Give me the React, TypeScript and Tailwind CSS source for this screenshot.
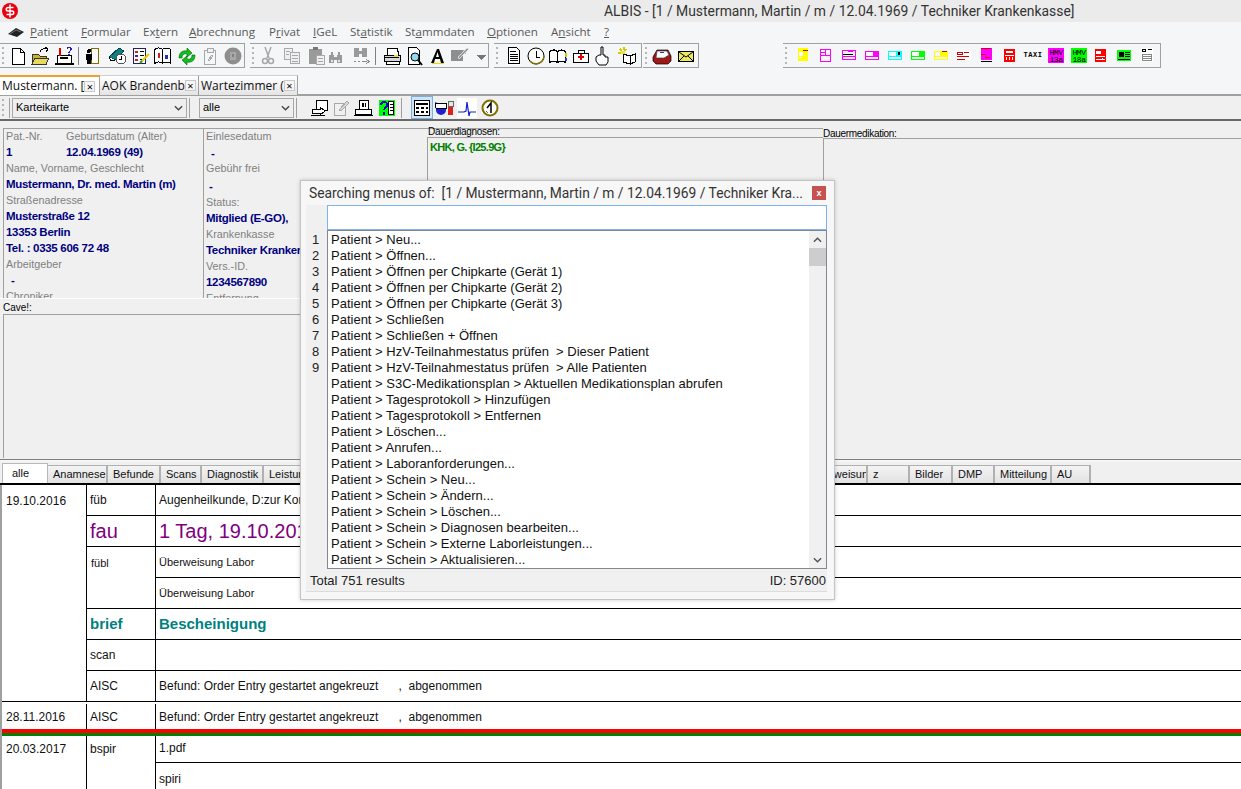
import React from "react";

const arial = "font-['Liberation_Sans',Arial,sans-serif]";
const segoe = "font-['Open_Sans',sans-serif]";
const roboto = "font-['Roboto',sans-serif]";

function Ico({ children, className = "" }: { children: React.ReactNode; className?: string }) {
  return (
    <svg viewBox="0 0 20 20" width={20} height={20} className={"shrink-0 " + className} shapeRendering="crispEdges">
      {children}
    </svg>
  );
}

const G = "#a8a8a8";

const icons: Record<string, React.ReactNode> = {
  newdoc: <path d="M4.500 2.500h8l4 4v12h-12z M12.500 2.500v4h4" fill="#fff" stroke="#000" />,
  open: (
    <>
      <path d="M2 8h6l2 2h6v8H2z" fill="#c8b432" stroke="#333" />
      <path d="M2 18l3-6h14l-3 6z" fill="#e8d860" stroke="#333" />
      <path d="M10 6c1-3 4-4 7-3M15 1l3 2-2 3" fill="none" stroke="#000" />
    </>
  ),
  pat: (
    <>
      <path d="M3 9h14v8H3z M1 17h18v1H1z" fill="#fff" stroke="#000" />
      <path d="M6 11h8v2H6z" fill="#000" />
      <path d="M5 2v7h1V2z" fill="#e00000" stroke="#e00000" />
      <path d="M13 3c1-2 4-2 4 0s-2 2-2 4M15 8v1" fill="none" stroke="#2020c0" strokeWidth={1.4} />
    </>
  ),
  door: (
    <>
      <path d="M9.500 2.500h7v15h-7z" fill="#fff" stroke="#807000" />
      <circle cx={7} cy={5} r={2} fill="#000" />
      <path d="M4 8h6v6H9v4H5v-4H4z" fill="#000" />
    </>
  ),
  book: (
    <>
      <path d="M1 11L11 2l5 3-9 9z" fill="#0f7f7f" stroke="#004040" />
      <path d="M1 11l2 4 4-1" fill="#fff" stroke="#000" />
      <circle cx={13} cy={13} r={5} fill="#fff" stroke="#555" />
      <path d="M13 10v3h-2" fill="none" stroke="#000" />
    </>
  ),
  list: (
    <>
      <path d="M2.500 2.500h12v15h-12z" fill="#fff" stroke="#202060" strokeWidth={1.5} />
      <path d="M4 5h3v2H4z" fill="#d02020" />
      <path d="M4 9h3v2H4z" fill="#2030b0" />
      <path d="M4 13h3v2H4z" fill="#d02020" />
      <path d="M9 5h4v1H9zM9 9h4v1H9zM9 13h2v1H9z" fill="#000" />
      <path d="M10 16l8-8" stroke="#e0d000" strokeWidth={2} shapeRendering="auto" />
      <path d="M9 17l2-2" stroke="#20a020" strokeWidth={2} shapeRendering="auto" />
    </>
  ),
  pair: (
    <>
      <path d="M1.500 3.500c3-2 6-2 8 0v14c-2-2-5-2-8 0z M9.500 3.500c2-2 6-2 8 0v14c-2-2-6-2-8 0z" fill="#fff" stroke="#000" />
      <path d="M5 7h2v5H5z" fill="#d02020" />
      <path d="M12 9h3v4h-3z" fill="#2030c0" />
    </>
  ),
  sync: (
    <>
      <path d="M2 12c0-5 3-8 8-7V2l5 5-5 4V8c-3-1-5 1-5 4z" fill="#10c020" stroke="#006000" strokeWidth={0.6} shapeRendering="auto" />
      <path d="M18 9c0 5-3 8-8 7v3l-5-5 5-4v3c3 1 5-1 5-4z" fill="#10c020" stroke="#006000" strokeWidth={0.6} shapeRendering="auto" />
    </>
  ),
  clip: (
    <>
      <path d="M4.500 4.500h11v14h-11z" fill="none" stroke={G} />
      <path d="M7 2h6v4H7z" fill="#f0f0f0" stroke={G} />
      <path d="M8 14l4-5 1 1-4 5z" fill="none" stroke={G} />
    </>
  ),
  disk: (
    <>
      <circle cx={10} cy={10} r={8.500} fill="#8e8e8e" shapeRendering="auto" />
      <path d="M7 6h6v8H7z" fill="#a8a8a8" />
      <path d="M9 8h2v3H9z" fill="#808080" />
    </>
  ),
  cut: (
    <>
      <path d="M7 1l4 11M13 1l-4 11" stroke={G} strokeWidth={1.5} shapeRendering="auto" />
      <circle cx={7} cy={15} r={2.500} fill="none" stroke={G} strokeWidth={1.5} shapeRendering="auto" />
      <circle cx={13} cy={15} r={2.500} fill="none" stroke={G} strokeWidth={1.5} shapeRendering="auto" />
    </>
  ),
  copy: (
    <>
      <path d="M2.500 2.500h8v11h-8z" fill="#f0f0f0" stroke={G} />
      <path d="M8.500 6.500h9v11h-9z" fill="#f0f0f0" stroke={G} />
      <path d="M10 9h6v1h-6zM10 12h6v1h-6zM10 15h6v1h-6zM4 5h4v1H4zM4 8h3v1H4z" fill={G} />
    </>
  ),
  paste: (
    <>
      <path d="M2 3h13v15H2z" fill="#9a9a9a" />
      <path d="M6 1h5v3H6z" fill="#777" />
      <path d="M9.500 9.500h8v9h-8z" fill="#f0f0f0" stroke={G} />
      <path d="M11 12h5v1h-5zM11 15h5v1h-5z" fill={G} />
    </>
  ),
  binoc: (
    <>
      <path d="M3 9h5v8H3zM11 9h5v8h-5zM8 11h3v3H8z" fill="#9a9a9a" />
      <path d="M5 6h2v3H5zM12 6h2v3h-2z" fill="#9a9a9a" />
      <path d="M5 14h2v2H5zM12 14h2v2h-2z" fill="#e8e8e8" />
    </>
  ),
  binocnext: (
    <>
      <path d="M3 2h5v9H3zM11 2h5v9h-5zM8 5h3v3H8z" fill="#9a9a9a" />
      <path d="M3 15h2v1H3zM7 15h2v1H7zM11 15h5v1h-5z" fill="#8a8a8a" />
      <path d="M15 13l3 2.500-3 2.500" fill="none" stroke="#8a8a8a" />
    </>
  ),
  print: (
    <>
      <path d="M6 2h9l2 7H5z" fill="#fff" stroke="#000" />
      <path d="M2 9h16v6H2z" fill="#d8d8d8" stroke="#000" />
      <path d="M4 15h13v3H4z" fill="#fff" stroke="#000" />
      <path d="M3 11h14v1H3z" fill="#000" />
      <path d="M12 9h4v2h-4z" fill="#e8e040" />
    </>
  ),
  preview: (
    <>
      <path d="M3.500 1.500h8l3 3v14h-11z" fill="#fff" stroke="#000" />
      <circle cx={10} cy={11} r={4} fill="#8fdcf0" stroke="#000" shapeRendering="auto" />
      <path d="M13 14l4 5" stroke="#000" strokeWidth={2} shapeRendering="auto" />
    </>
  ),
  letter: (
    <>
      <path d="M4 17h12v1H4z" fill="#e8d800" />
      <path d="M3 17L9 3h2l5 14h-3l-1-4H7l-1 4z M8 11h3l-1.500-5z" fill="#000" shapeRendering="auto" />
    </>
  ),
  pen: (
    <>
      <path d="M1 4h12v11H1z" fill="#8e8e8e" />
      <path d="M13 4h4l-1 5z" fill="#a8a8a8" />
      <path d="M9 13l10-10-2-1-9 9z" fill="#9a9a9a" stroke="#f0f0f0" strokeWidth={0.7} shapeRendering="auto" />
    </>
  ),
  caret: <path d="M5 9h10l-5 5z" fill="#777" />,
  doc: (
    <>
      <path d="M4.500 1.500h8l3 3v13h-11z" fill="#fff" stroke="#000" />
      <path d="M6 5h6v1H6zM6 8h8v1H6zM6 10h8v1H6zM6 12h8v1H6zM6 14h8v1H6z" fill="#000" />
      <path d="M3 18h14v1H3z" fill="#fff" />
    </>
  ),
  clock: (
    <>
      <circle cx={10} cy={10} r={8} fill="#fff" stroke="#000" shapeRendering="auto" />
      <path d="M18 10a8 8 0 0 1-14 5" fill="none" stroke="#807000" strokeWidth={1.5} shapeRendering="auto" />
      <path d="M10 5v6h4" fill="none" stroke="#000" />
    </>
  ),
  openbook: (
    <>
      <path d="M1.500 5.500c3-2 6-2 8 0v11c-2-1.500-5-1.500-8 0z M9.500 5.500c2-2 6-2 8 0v11c-2-1.500-6-1.500-8 0z" fill="#fff" stroke="#000" strokeWidth={1.2} />
      <path d="M17 7h2v4h-2z" fill="#d0c800" />
      <path d="M17 12h2v3h-2z" fill="#2040c0" />
    </>
  ),
  med: (
    <>
      <path d="M2.500 7.500h15v9h-15z" fill="#fff" stroke="#000" />
      <path d="M7 7V4h6v3" fill="none" stroke="#000" />
      <path d="M9 8h2v2h2v2h-2v2H9v-2H7v-2h2z" fill="#e00000" />
    </>
  ),
  hand: (
    <path d="M9 1h2v8h2v2h3v5l-2 3H7l-3-4v-4l3-2h2z" fill="#fff" stroke="#000" strokeLinejoin="round" shapeRendering="auto" />
  ),
  tip: (
    <>
      <path d="M6 8l7 2v8l-7-2z M13 10l5-2v8l-5 2z" fill="#fff" stroke="#000" />
      <path d="M3 3l2 2M7 1v3M1 7h3M9 3l-1 2" stroke="#d8c800" strokeWidth={1.5} />
      <path d="M4 5h4v3H4z" fill="#e8e040" />
    </>
  ),
  inbox: (
    <>
      <path d="M1 11L5 4h11l3 6v5l-3 3H4l-3-3z" fill="#a01818" stroke="#000" strokeWidth={0.7} shapeRendering="auto" />
      <path d="M5 5h10l2 4-5 3H4z" fill="#fff" stroke="#444" strokeWidth={0.7} shapeRendering="auto" />
      <path d="M8 6h4v1H8z" fill="#2040c0" />
    </>
  ),
  mail: (
    <>
      <path d="M2.500 5.500h15v10h-15z" fill="#ece860" stroke="#000" />
      <path d="M3 6l7 5 7-5M3 15l5-5M17 15l-5-5" fill="none" stroke="#000" shapeRendering="auto" />
    </>
  ),
  sendform: (
    <>
      <path d="M6.500 2.500h11v10h-11z" fill="#fff" stroke="#000" />
      <path d="M2 11h8v-2l5 4-5 4v-2H2z" fill="#fff" stroke="#000" />
      <path d="M1 17.500h14" stroke="#000" />
    </>
  ),
  note: (
    <>
      <path d="M3.500 5.500h11v12h-11z" fill="none" stroke={G} />
      <path d="M8 12l8-9 2 2-8 8z" fill="#d8d8d8" stroke={G} />
    </>
  ),
  printer2: (
    <>
      <path d="M6.500 2.500h9v9h-9z" fill="#fff" stroke="#000" />
      <path d="M9 5h2v4H9zM12 5h1v4h-1z" fill="#000" />
      <path d="M2.500 11.500h16v5h-16z" fill="#fff" stroke="#000" />
      <path d="M1 17h19v1H1z" fill="#000" />
    </>
  ),
  help: (
    <>
      <path d="M2 2h16v16H2z" fill="#00ff00" />
      <path d="M4 7c0-4 6-4 6 0 0 3-3 3-3 5M7 14v3" fill="none" stroke="#0000d0" strokeWidth={2} />
      <path d="M11.500 3.500h5v13h-5z" fill="#fff" stroke="#000" />
      <path d="M13 6h3v1h-3zM13 9h3v1h-3zM13 12h3v1h-3z" fill="#000" />
    </>
  ),
  table: (
    <>
      <path d="M2.500 2.500h15v15h-15z" fill="#fff" stroke="#000" />
      <path d="M4 5h12v2H4zM4 9h3v2H4zM9 9h3v2H9zM14 9h2v2h-2zM4 13h3v2H4zM9 13h3v2H9zM14 13h2v2h-2z" fill="#000" />
    </>
  ),
  mortar: (
    <>
      <path d="M1 4l5 2h6v6a5 5 0 0 1-10 0z" fill="#2020d0" shapeRendering="auto" />
      <path d="M1 5h11v5H2z" fill="#fff" stroke="#000" />
      <path d="M14 4h5v13h-5z" fill="#e02020" />
      <path d="M14 3h5v5h-5z" fill="#e8e8e8" stroke="#666" />
    </>
  ),
  ecg: (
    <>
      <path d="M0 0h20v20H0z" fill="#fff" />
      <path d="M1 14h6l2-1 1-9 2 14 1-4h6" fill="none" stroke="#1020d0" strokeWidth={1.2} shapeRendering="auto" />
    </>
  ),
  one: (
    <>
      <circle cx={10} cy={10} r={7.500} fill="#fff" stroke="#807000" strokeWidth={2} shapeRendering="auto" />
      <path d="M7 10l4-5v10" fill="none" stroke="#000" strokeWidth={1.500} shapeRendering="auto" />
      <path d="M6 13l2 2" stroke="#777" />
    </>
  ),
};

// the coloured form symbols of the right toolbar
function Form({ name }: { name: string }) {
  const r = (x: number, y: number, w: number, h: number, f: string) => <rect x={x} y={y} width={w} height={h} fill={f} />;
  switch (name) {
    case "y1":
      return <>{r(5, 0, 10, 12, "#ffff00")}{r(5, 12, 10, 1, "#ffff00")}{r(10, 2, 5, 1, "#c00000")}{r(6, 4, 4, 4, "#fff")}{r(6, 9, 3, 1, "#fff")}</>;
    case "m1":
      return <path d="M4.500 1.500h10v12h-10z M4.500 7.500h10 M9.500 1.500v6 M4.500 4.500h5" fill="none" stroke="#ff00ff" />;
    case "m2":
      return <>{<path d="M3.500 2.500h13v9h-13z M3.500 8.500h13" fill="none" stroke="#ff00ff" />}{r(4, 6, 10, 1, "#000")}{r(9, 3, 5, 1, "#ff00ff")}</>;
    case "m3":
      return <>{<path d="M3.500 3.500h13v8h-13z M3.500 8.500h13" fill="none" stroke="#ff00ff" />}{r(11, 3, 6, 5, "#ff00ff")}</>;
    case "c":
      return <>{<path d="M3.500 3.500h13v8h-13z M3.500 8.500h13" fill="none" stroke="#00ffff" />}{r(11, 3, 6, 5, "#00ffff")}{r(13, 4, 2, 3, "#000")}</>;
    case "g":
      return <>{<path d="M3.500 3.500h13v8h-13z M3.500 8.500h13" fill="none" stroke="#00ff00" />}{r(11, 3, 6, 5, "#00ff00")}</>;
    case "y2":
      return <>{<path d="M3.500 3.500h13v8h-13z M3.500 8.500h13" fill="none" stroke="#ffff00" />}{r(9, 4, 8, 4, "#ffff00")}{r(11, 3, 5, 1, "#c00000")}</>;
    case "r1":
      return <>{r(2, 3, 15, 9, "#fff")}<path d="M3.500 4.500h5v2h-5z" fill="none" stroke="#d00000" />{r(10, 4, 5, 1, "#d00000")}{r(3, 8, 12, 1, "#d00000")}{r(3, 11, 8, 1, "#d00000")}</>;
    case "m4":
      return <>{r(4, 0, 11, 12, "#ff00ff")}{r(4, 0, 10, 1, "#d00000")}{r(4, 6, 5, 1, "#d00000")}{r(8, 9, 5, 1, "#d00000")}{r(4, 12, 3, 2, "#fff")}{r(4, 13, 11, 1, "#000")}</>;
    case "r2":
      return <>{r(4, 1, 11, 13, "#ff0000")}{r(6, 3, 7, 2, "#fff")}{r(5, 7, 9, 1, "#fff")}{r(6, 9, 1, 3, "#fff")}{r(9, 9, 1, 3, "#fff")}{r(12, 9, 1, 3, "#fff")}</>;
    case "r3":
      return <>{r(4, 1, 11, 13, "#ff0000")}{r(5, 3, 5, 3, "#fff")}{r(5, 8, 9, 1, "#fff")}{r(5, 11, 9, 1, "#fff")}{r(11, 10, 1, 2, "#fff")}</>;
    case "gr":
      return <>{r(3, 2, 14, 11, "#00ff00")}{r(5, 4, 5, 5, "#000")}{r(11, 4, 5, 1, "#000")}{r(11, 6, 5, 1, "#000")}{r(11, 8, 5, 1, "#000")}{r(4, 11, 12, 1, "#000")}</>;
    default:
      return <>{r(4, 0, 12, 14, "#fff")}<path d="M5.500 1.500h3v2h-3z" fill="none" stroke="#000" />{r(11, 1, 4, 1, "#000")}<path d="M5.500 6.500h9v6h-9z M5.500 8.500h9 M5.500 10.500h9" fill="none" stroke="#888" /></>;
  }
}

function FormIcon({ name, className }: { name: string; className: string }) {
  return (
    <svg viewBox="0 0 20 16" width={20} height={16} className={"shrink-0 " + className} shapeRendering="crispEdges">
      <Form name={name} />
    </svg>
  );
}

function Hmv({ top, bottom, bg, className }: { top: string; bottom: string; bg: string; className: string }) {
  return (
    <span className={"flex h-[15px] w-[16px] shrink-0 flex-col items-center justify-center overflow-hidden text-center font-['Liberation_Mono',monospace] text-[8px] leading-[7px] tracking-[-0.5px] text-black " + bg + " " + className}>
      <span>{top}</span>
      <span>{bottom}</span>
    </span>
  );
}

function Grip() {
  return (
    <span className="ml-[2px] flex h-[22px] w-[3px] shrink-0 flex-col justify-between py-[2px]">
      {[0, 1, 2, 3].map((i) => (
        <span key={i} className="h-[2px] w-[2px] bg-[#b5b5b5]" />
      ))}
    </span>
  );
}

function Bar({ width, items, className = "" }: { width: string; items: [string, string][]; className?: string }) {
  return (
    <div className={"relative flex h-[25px] shrink-0 items-center border-y border-r border-[#a0a0a0] " + width + " " + className}>
      <span className="absolute left-0 top-0 flex h-full items-center">
        <Grip />
      </span>
      {items.map(([name, ml], i) =>
        name === "|" ? (
          <span key={i} className={"h-[18px] w-px shrink-0 bg-[#808080] " + ml} />
        ) : (
          <Ico key={i} className={ml}>
            {icons[name]}
          </Ico>
        ),
      )}
    </div>
  );
}

function Logo() {
  return (
    <svg viewBox="0 0 16 16" width={16} height={16} className="ml-[2px] shrink-0">
      <circle cx={8} cy={8} r={8} fill="#e8000c" />
      <path d="M8 1.500v13" stroke="#fff" strokeWidth={1.4} />
      <path d="M11.500 4.500H6a1.700 1.700 0 0 0 0 3.500h4a1.700 1.700 0 0 1 0 3.500H4.500" fill="none" stroke="#fff" strokeWidth={1.500} />
    </svg>
  );
}

// before the access key, the key, after it, slot width
const menu: [string, string, string, string][] = [
  ["", "P", "atient", "w-[51px]"],
  ["", "F", "ormular", "w-[62px]"],
  ["Ex", "t", "ern", "w-[46px]"],
  ["", "A", "brechnung", "w-[80px]"],
  ["P", "r", "ivat", "w-[44px]"],
  ["", "I", "GeL", "w-[37px]"],
  ["St", "a", "tistik", "w-[55px]"],
  ["St", "a", "mmdaten", "w-[82px]"],
  ["", "O", "ptionen", "w-[64px]"],
  ["A", "n", "sicht", "w-[53px]"],
  ["", "?", "", "w-[12px]"],
];

function Menu() {
  return (
    <div className={"flex h-[20px] items-center bg-[#f5f6f7] text-[11.600px] text-[#5a5a5a] " + segoe}>
      <svg viewBox="0 0 18 12" width={18} height={12} className="ml-[7px] mr-[5px] shrink-0">
        <path d="M1 8l8-6 8 4-7 5z" fill="#222" />
        <path d="M3 8l6-4 5 2" fill="none" stroke="#777" />
      </svg>
      {menu.map(([a, k, c, w]) => (
        <span key={a + k + c} className={"whitespace-nowrap " + w}>
          {a}
          <span className="underline">{k}</span>
          {c}
        </span>
      ))}
    </div>
  );
}

function Toolbars() {
  const forms = ["y1", "m1", "m2", "m3", "c", "g", "y2", "r1", "m4", "r2"];
  return (
    <div className="flex h-[33px] items-start bg-[#f5f6f7] pt-[1px]">
      <Bar
        width="w-[245px]"
        items={[
          ["newdoc", "ml-[8px]"],
          ["open", "ml-[2px]"],
          ["pat", "ml-[4px]"],
          ["|", "ml-[4px]"],
          ["door", "ml-[3px]"],
          ["book", "ml-[6px]"],
          ["list", "ml-[3px]"],
          ["pair", "ml-[2px]"],
          ["sync", "ml-[4px]"],
          ["clip", "ml-[3px]"],
          ["disk", "ml-[3px]"],
        ]}
      />
      <Bar
        width="w-[239px]"
        className="ml-[5px]"
        items={[
          ["cut", "ml-[8px]"],
          ["copy", "ml-[4px]"],
          ["paste", "ml-[5px]"],
          ["binoc", "ml-[-1px]"],
          ["binocnext", "ml-[5px]"],
          ["|", "ml-[4px]"],
          ["print", "ml-[6px]"],
          ["preview", "ml-[3px]"],
          ["letter", "ml-[3px]"],
          ["pen", "ml-[2px]"],
          ["caret", "ml-[1px]"],
        ]}
      />
      <Bar
        width="w-[148px]"
        className="ml-[5px]"
        items={[
          ["doc", "ml-[10px]"],
          ["clock", "ml-[2px]"],
          ["openbook", "ml-[2px]"],
          ["med", "ml-[3px]"],
          ["hand", "ml-[1px]"],
          ["tip", "ml-[5px]"],
        ]}
      />
      <Bar
        width="w-[56px]"
        className="ml-[1px]"
        items={[
          ["inbox", "ml-[9px]"],
          ["mail", "ml-[4px]"],
        ]}
      />
      <div className="relative ml-[84px] flex h-[25px] w-[378px] shrink-0 items-center border-y border-r border-[#a0a0a0]">
        <span className="absolute left-0 top-0 flex h-full items-center">
          <Grip />
        </span>
        {forms.map((f, i) => (
          <FormIcon key={f} name={f} className={i === 0 ? "ml-[10px]" : "ml-[3px]"} />
        ))}
        <span className="ml-[3px] w-[20px] shrink-0 text-center font-['Liberation_Mono',monospace] text-[7px] font-bold tracking-[0.5px] text-black">TAXI</span>
        <Hmv top="HMV" bottom="13a" bg="bg-[#ff00ff]" className="ml-[5px]" />
        <Hmv top="HMV" bottom="18a" bg="bg-[#00ff00]" className="ml-[7px]" />
        <FormIcon name="r3" className="ml-[4px]" />
        <FormIcon name="gr" className="ml-[3px]" />
        <FormIcon name="w" className="ml-[3px]" />
      </div>
    </div>
  );
}

function DocTab({ label, active }: { label: string; active?: boolean }) {
  return (
    <div
      className={
        "flex h-[20px] items-center justify-between overflow-hidden whitespace-nowrap border-r border-[#a0a0a0] pl-[2px] pr-[4px] text-[12px] text-[#111] " +
        (active ? "w-[100px] border-t-2 border-t-[#f0a030] bg-white" : "w-[99px] border-t border-t-[#d0d0d0] bg-gradient-to-b from-[#ffffff] to-[#e4e4e4]") +
        " " +
        segoe
      }
    >
      <span>{label}</span>
      <span className="flex h-[11px] w-[11px] shrink-0 items-center justify-center border border-[#c8c8c8] bg-[#f5f5f5] text-[11px] leading-none text-black">
        ×
      </span>
    </div>
  );
}

function Combo({ label, width }: { label: string; width: string }) {
  return (
    <div className={"flex h-[20px] shrink-0 items-center justify-between border border-[#a8a8a8] bg-[#efefef] pl-[3px] pr-[3px] text-[11px] text-black " + width + " " + arial}>
      <span>{label}</span>
      <svg viewBox="0 0 10 6" width={9} height={6}>
        <path d="M1 1l4 4 4-4" fill="none" stroke="#444" strokeWidth={1.500} />
      </svg>
    </div>
  );
}

function Sep({ className }: { className: string }) {
  return <span className={"h-[20px] w-px shrink-0 bg-[#a0a0a0] " + className} />;
}

function FilterBar() {
  return (
    <div className="flex h-[26px] items-center border-t border-b-2 border-t-[#a0a0a0] border-b-[#696969] bg-[#f0f0f0]">
      <Grip />
      <Sep className="ml-[4px]" />
      <Combo label="Karteikarte" width="w-[175px] ml-[2px]" />
      <Sep className="ml-[2px]" />
      <Combo label="alle" width="w-[95px] ml-[9px]" />
      <Sep className="ml-[2px]" />
      <Ico className="ml-[13px]">{icons.sendform}</Ico>
      <Ico className="ml-[1px]">{icons.note}</Ico>
      <Ico className="ml-[2px]">{icons.printer2}</Ico>
      <Ico className="ml-[4px]">{icons.help}</Ico>
      <Sep className="ml-[4px]" />
      <span className="ml-[9px] flex h-[23px] w-[22px] shrink-0 items-center justify-center border border-[#7ab0e0] bg-[#cfe4f8]">
        <Ico>{icons.table}</Ico>
      </span>
      <Ico className="ml-[1px]">{icons.mortar}</Ico>
      <Ico className="ml-[3px]">{icons.ecg}</Ico>
      <Ico className="ml-[3px]">{icons.one}</Ico>
    </div>
  );
}

function Label({ children, className = "" }: { children: React.ReactNode; className?: string }) {
  return <div className={"h-[16px] whitespace-nowrap text-[10.800px] leading-[16px] text-[#808080] " + className}>{children}</div>;
}

function Value({ children, className = "" }: { children: React.ReactNode; className?: string }) {
  return <div className={"h-[16px] whitespace-nowrap text-[11.500px] leading-[16px] font-bold tracking-[-0.3px] text-[#000080] " + className}>{children}</div>;
}

function PatientPanel() {
  return (
    <div className={"h-[338px] bg-[#f0f0f0] " + arial}>
      <div className="flex h-[177px] pt-[7px]">
        <div className="ml-[3px] h-[170px] w-[200px] overflow-hidden border-l border-t border-[#a0a0a0] pl-[2px]">
          <div className="mt-[-1px] flex">
            <div className="w-[60px]">
              <Label>Pat.-Nr.</Label>
              <Value>1</Value>
            </div>
            <div>
              <Label>Geburtsdatum (Alter)</Label>
              <Value>12.04.1969 (49)</Value>
            </div>
          </div>
          <Label>Name, Vorname, Geschlecht</Label>
          <Value>Mustermann, Dr. med. Martin (m)</Value>
          <Label>Straßenadresse</Label>
          <Value>Musterstraße 12</Value>
          <Value>13353 Berlin</Value>
          <Value>Tel. : 0335 606 72 48</Value>
          <Label>Arbeitgeber</Label>
          <Value className="pl-[5px]">-</Value>
          <Label>Chroniker</Label>
        </div>
        <div className="h-[170px] w-[224px] overflow-hidden border-l border-t border-[#a0a0a0] pl-[2px]">
          <Label className="mt-[-1px]">Einlesedatum</Label>
          <Value className="pl-[5px] pt-px">-</Value>
          <Label>Gebühr frei</Label>
          <Value className="mt-[2px] pl-[3px]">-</Value>
          <Label>Status:</Label>
          <Value>Mitglied (E-GO),</Value>
          <Label>Krankenkasse</Label>
          <Value>Techniker Krankenkasse</Value>
          <Label>Vers.-ID.</Label>
          <Value>1234567890</Value>
          <Label>Entfernung</Label>
        </div>
        <div className="h-[170px] w-[396px] border-t border-[#a0a0a0] text-[10px] text-black">
          <div className="h-[8px] pl-px leading-[6px] tracking-[-0.3px]">Dauerdiagnosen:</div>
          <div className="h-[161px] border-l border-t border-[#a0a0a0] pl-[2px] pt-[1px] text-[11px] font-bold tracking-[-0.7px] text-[#008000]">
            KHK, G. {"{I25.9G}"}
          </div>
        </div>
        <div className="grow text-[10px] text-black">
          <div className="h-[10px] pt-[1px] leading-[9px] tracking-[-0.3px]">Dauermedikation:</div>
          <div className="h-[160px] border-l border-t border-[#a0a0a0]" />
        </div>
      </div>
      <div className="w-[826px] border-t border-white pl-[3px]">
        <div className="h-[15px] text-[10px] leading-[18px] text-black">Cave!:</div>
        <div className="h-[144px] border-l border-t border-[#a0a0a0]" />
      </div>
    </div>
  );
}

const sheetTabs: [string, string][] = [
  ["Anamnese", "w-[60px]"],
  ["Befunde", "w-[53px]"],
  ["Scans", "w-[41px]"],
  ["Diagnostik", "w-[62px]"],
  ["Leistungen", "w-[541px]"],
  ["Überweisun", "w-[63px]"],
  ["z", "w-[42px]"],
  ["Bilder", "w-[43px]"],
  ["DMP", "w-[42px]"],
  ["Mitteilung", "w-[57px]"],
  ["AU", "w-[39px]"],
];

function SheetTabs() {
  return (
    <div className={"flex h-[23px] items-end border-b-2 border-black bg-[#f0f0f0] pl-[2px] text-[11px] text-[#111] " + arial}>
      <span className="flex h-[20px] w-[46px] shrink-0 items-center border-x border-t border-[#b8b8b8] bg-white pl-[9px]">alle</span>
      {sheetTabs.map(([t, w]) => (
        <span
          key={t}
          className={"flex h-[18px] shrink-0 items-center overflow-hidden whitespace-nowrap border-r-2 border-t border-[#b0b0b0] bg-gradient-to-b from-[#f4f4f4] to-[#e2e2e2] pl-[5px] " + w}
        >
          {t}
        </span>
      ))}
    </div>
  );
}

function Cell({ children, className = "" }: { children?: React.ReactNode; className?: string }) {
  return <div className={"flex items-center overflow-hidden whitespace-nowrap border-b border-black pl-[3px] " + className}>{children}</div>;
}

function Sheet() {
  const dateCls = "items-start border-r border-black pl-[4px] pt-[7px]";
  return (
    <div className={"border-l-2 border-[#a0a0a0] bg-white text-[12px] text-[#111] " + arial}>
      <div className="grid grid-cols-[85px_69px_1fr] auto-rows-[31px]">
        <Cell className={"row-span-7 " + dateCls}>19.10.2016</Cell>
        <Cell className="border-r">füb</Cell>
        <Cell>Augenheilkunde, D:zur Kontrolle</Cell>
        <Cell className="border-r text-[20px] text-[#800080]">fau</Cell>
        <Cell className="text-[20px] text-[#800080]">1 Tag, 19.10.2016</Cell>
        <Cell className="row-span-2 items-start border-r pl-[4px] pt-[8px] text-[11px]">fübl</Cell>
        <Cell className="text-[11px]">Überweisung Labor</Cell>
        <Cell className="text-[11px]">Überweisung Labor</Cell>
        <Cell className="border-r text-[15px] font-bold text-[#008080]">brief</Cell>
        <Cell className="text-[15px] font-bold text-[#008080]">Bescheinigung</Cell>
        <Cell className="border-r">scan</Cell>
        <Cell />
        <Cell className="border-r">AISC</Cell>
        <Cell>Befund: Order Entry gestartet angekreuzt&nbsp;&nbsp;&nbsp;&nbsp;&nbsp;&nbsp;, &nbsp;abgenommen</Cell>
      </div>
      <div className="grid h-[27px] grid-cols-[85px_69px_1fr] pt-[2px]">
        <div className="flex items-center border-r border-black pl-[4px]">28.11.2016</div>
        <div className="flex items-center border-r border-black pl-[3px]">AISC</div>
        <div className="flex items-center whitespace-nowrap pl-[3px]">Befund: Order Entry gestartet angekreuzt&nbsp;&nbsp;&nbsp;&nbsp;&nbsp;&nbsp;, &nbsp;abgenommen</div>
      </div>
      <div className="h-[4px] bg-[#ff0000]" />
      <div className="h-[3px] bg-[#008000]" />
      <div className="grid grid-cols-[85px_69px_1fr] grid-rows-[27px_32px]">
        <Cell className="row-span-2 items-start border-b-0 border-r pl-[4px] pt-[4px]">20.03.2017</Cell>
        <Cell className="row-span-2 items-start border-b-0 border-r pt-[4px]">bspir</Cell>
        <Cell className="pb-[3px]">1.pdf</Cell>
        <Cell className="border-b-0">spiri</Cell>
      </div>
    </div>
  );
}

const results = [
  "Patient > Neu...",
  "Patient > Öffnen...",
  "Patient > Öffnen per Chipkarte (Gerät 1)",
  "Patient > Öffnen per Chipkarte (Gerät 2)",
  "Patient > Öffnen per Chipkarte (Gerät 3)",
  "Patient > Schließen",
  "Patient > Schließen + Öffnen",
  "Patient > HzV-Teilnahmestatus prüfen  > Dieser Patient",
  "Patient > HzV-Teilnahmestatus prüfen  > Alle Patienten",
  "Patient > S3C-Medikationsplan > Aktuellen Medikationsplan abrufen",
  "Patient > Tagesprotokoll > Hinzufügen",
  "Patient > Tagesprotokoll > Entfernen",
  "Patient > Löschen...",
  "Patient > Anrufen...",
  "Patient > Laboranforderungen...",
  "Patient > Schein > Neu...",
  "Patient > Schein > Ändern...",
  "Patient > Schein > Löschen...",
  "Patient > Schein > Diagnosen bearbeiten...",
  "Patient > Schein > Externe Laborleistungen...",
  "Patient > Schein > Aktualisieren...",
];

function SearchDialog() {
  return (
    <div className={"absolute left-[300px] top-[180px] z-10 h-[420px] w-[535px] border border-[#c4c4c4] bg-[#f7f7f7] shadow-[0_0_4px_rgba(0,0,0,0.2)] " + arial}>
      <div className="flex h-[24px] items-center justify-between pl-[8px] pr-[8px]">
        <span className={"whitespace-nowrap text-[13.800px] text-[#333] " + roboto}>
          Searching menus of:&nbsp; [1 / Mustermann, Martin / m / 12.04.1969 / Techniker Kra...
        </span>
        <span className="flex h-[14px] w-[14px] items-center justify-center bg-[#c75050] text-[9px] font-bold leading-none text-white">x</span>
      </div>
      <div className="ml-[5px] flex h-[364px] w-[521px] bg-[#f0f0f0]">
        <div className="w-[21px] shrink-0 pl-[6px] pt-[27px] text-[13px] leading-[16px] text-[#222]">
          {[1, 2, 3, 4, 5, 6, 7, 8, 9].map((n) => (
            <div key={n}>{n}</div>
          ))}
        </div>
        <div className="flex w-[500px] flex-col">
          <div className="h-[25px] border border-[#7eb4ea] bg-white" />
          <div className="flex h-[339px] border border-[#828790] bg-white">
            <div className="grow overflow-hidden pl-[3px] pt-px text-[13px] leading-[16px] text-[#111]">
              {results.map((r) => (
                <div key={r} className="whitespace-pre">
                  {r}
                </div>
              ))}
            </div>
            <div className="flex w-[17px] shrink-0 flex-col bg-[#f0f0f0]">
              <div className="flex h-[17px] items-center justify-center">
                <svg viewBox="0 0 10 6" width={9} height={6}>
                  <path d="M1 5l4-4 4 4" fill="none" stroke="#505050" strokeWidth={1.500} />
                </svg>
              </div>
              <div className="h-[18px] bg-[#cdcdcd]" />
              <div className="grow" />
              <div className="flex h-[17px] items-center justify-center">
                <svg viewBox="0 0 10 6" width={9} height={6}>
                  <path d="M1 1l4 4 4-4" fill="none" stroke="#505050" strokeWidth={1.500} />
                </svg>
              </div>
            </div>
          </div>
        </div>
      </div>
      <div className="ml-[5px] flex h-[23px] w-[521px] items-center justify-between border-b border-[#dcdcdc] bg-[#f0f0f0] pl-[4px] pr-px pt-[2px] text-[13px] text-[#222]">
        <span>Total 751 results</span>
        <span>ID: 57600</span>
      </div>
    </div>
  );
}

export default function App() {
  return (
    <div className="relative h-[789px] w-[1241px] overflow-hidden bg-[#f5f6f7]">
      <div className="flex h-[22px] items-center bg-[#ebebeb]">
        <Logo />
        <span className={"ml-[586px] whitespace-nowrap text-[13.900px] text-[#333] " + roboto}>
          ALBIS - [1 / Mustermann, Martin / m / 12.04.1969 / Techniker Krankenkasse]
        </span>
      </div>
      <Menu />
      <Toolbars />
      <div className="flex h-[20px] border-b border-[#a0a0a0] bg-[#f5f6f7]">
        <DocTab label="Mustermann. [" active />
        <DocTab label="AOK Brandenb" />
        <DocTab label="Wartezimmer (" />
      </div>
      <FilterBar />
      <PatientPanel />
      <div className="h-[3px] border-t border-[#808080] bg-[#f5f5f5]" />
      <SheetTabs />
      <Sheet />
      <SearchDialog />
    </div>
  );
}
